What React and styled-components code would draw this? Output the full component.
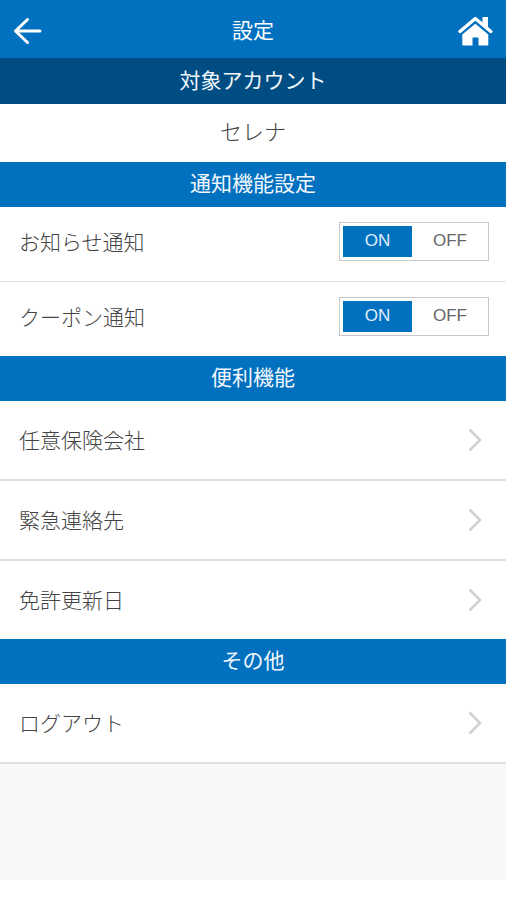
import React, { useState } from "react";
import styled, { createGlobalStyle } from "styled-components";

const GlobalStyle = createGlobalStyle`
  *, *::before, *::after { box-sizing: border-box; }
  body {
    margin: 0;
    background: #fff;
    color: #444;
    font-family: "Noto Sans CJK JP", sans-serif;
    font-size: 21px;
    line-height: 32px;
  }
`;

const Page = styled.div`
  min-height: 100vh;
  display: flex;
  flex-direction: column;
`;

const Header = styled.header`
  display: grid;
  grid-template-columns: 60px 1fr 60px;
  align-items: center;
  height: 58px;
  padding-top: 3px;
  background: #0070bf;
  color: #fff;
`;

const Title = styled.h1`
  margin: 0;
  padding-bottom: 3px;
  font-size: 21px;
  font-weight: 400;
  text-align: center;
`;

const IconButton = styled.button`
  display: flex;
  justify-content: ${(p) => (p.$end ? "flex-end" : "flex-start")};
  padding: 0 12px;
  border: 0;
  background: none;
  color: inherit;
  cursor: pointer;
`;

const SectionTitle = styled.h2`
  margin: 0;
  height: ${(p) => (p.$dark ? 46 : 45)}px;
  padding-top: ${(p) => (p.$dark ? 5 : 4)}px;
  background: ${(p) => (p.$dark ? "#004d84" : "#0070bf")};
  color: #f2f8fd;
  font-size: 21px;
  font-weight: 400;
  text-align: center;
`;

const Account = styled.p`
  margin: 0;
  height: 58px;
  padding-top: 10px;
  background: #fff;
  font-size: 22px;
  font-weight: 300;
  text-align: center;
`;

const List = styled.ul`
  margin: 0;
  padding: 0;
  list-style: none;
  background: #fff;
  font-weight: 300;
`;

const Item = styled.li`
  border-bottom: ${(p) => (p.$last ? 0 : p.$thin ? 1 : 2)}px solid #e0e0e0;
`;

const SettingRow = styled.fieldset`
  display: flex;
  align-items: center;
  justify-content: space-between;
  height: 74px;
  margin: 0;
  padding: 0 17px 6px 19px;
  border: 0;
`;

const Switch = styled.div`
  display: grid;
  grid-template-columns: 69px 76px;
  height: 39px;
  padding: 3px 0 3px 3px;
  border: 1px solid #c8c8c8;
  background: #fff;
`;

const Choice = styled.label`
  display: flex;
  align-items: center;
  justify-content: center;
  color: #666;
  font-family: "Liberation Sans", sans-serif;
  font-size: 17px;
  line-height: 20px;
  cursor: pointer;

  &:has(input:checked) {
    background: #0070bf;
    color: #e0effa;
  }
`;

const Radio = styled.input`
  appearance: none;
  width: 0;
  height: 0;
  margin: 0;
`;

const LinkRow = styled.a`
  display: flex;
  align-items: center;
  justify-content: space-between;
  height: 78px;
  padding: 0 24px 0 19px;
  color: inherit;
  text-decoration: none;
`;

const LinkLabel = styled.span`
  padding-bottom: 3px;
`;

const Rest = styled.div`
  flex: 1;
  background: #f8f8f8;
`;

const Footer = styled.footer`
  height: 20px;
  background: #fff;
`;

function BackIcon() {
  return (
    <svg width="30" height="28" viewBox="0 0 30 28" fill="none" stroke="#fff" strokeWidth="3" strokeLinecap="round" strokeLinejoin="round" aria-hidden="true">
      <path d="M15.5 2.5 3.5 14l12 11.5M3.5 14H28" />
    </svg>
  );
}

function HomeIcon() {
  return (
    <svg width="36" height="30" viewBox="0 0 36 30" aria-hidden="true">
      <path fill="#fff" d="M24.500 1H30v12l-5.500-5z" />
      <path fill="none" stroke="#fff" strokeWidth="3.4" strokeLinecap="round" strokeLinejoin="round" d="M2 15.500 17.300 2.500l15.500 13" />
      <path fill="#fff" d="M17.300 7.800 30.300 18.500v10a1 1 0 0 1-1 1H20.500V21.500H14.500v8H5.300a1 1 0 0 1-1-1V18.500z" />
    </svg>
  );
}

function Chevron() {
  return (
    <svg width="14" height="24" viewBox="0 0 14 24" fill="none" stroke="#d0d0d0" strokeWidth="2.5" aria-hidden="true">
      <path d="M1.500 1.500 12 12 1.500 22.500" />
    </svg>
  );
}

function Setting({ name, label }) {
  const [value, setValue] = useState("ON");
  return (
    <SettingRow aria-label={label}>
      <span>{label}</span>
      <Switch>
        {["ON", "OFF"].map((option) => (
          <Choice key={option}>
            <Radio type="radio" name={name} checked={value === option} onChange={() => setValue(option)} />
            {option}
          </Choice>
        ))}
      </Switch>
    </SettingRow>
  );
}

function LinkItem({ label, last }) {
  return (
    <Item $last={last}>
      <LinkRow href="#">
        <LinkLabel>{label}</LinkLabel>
        <Chevron />
      </LinkRow>
    </Item>
  );
}

export default function App() {
  return (
    <Page>
      <GlobalStyle />
      <Header>
        <IconButton aria-label="戻る"><BackIcon /></IconButton>
        <Title>設定</Title>
        <IconButton $end aria-label="ホーム"><HomeIcon /></IconButton>
      </Header>
      <SectionTitle $dark>対象アカウント</SectionTitle>
      <Account>セレナ</Account>
      <SectionTitle>通知機能設定</SectionTitle>
      <List>
        <Item $thin><Setting name="news" label="お知らせ通知" /></Item>
        <Item $last><Setting name="coupon" label="クーポン通知" /></Item>
      </List>
      <SectionTitle>便利機能</SectionTitle>
      <List>
        <LinkItem label="任意保険会社" />
        <LinkItem label="緊急連絡先" />
        <LinkItem label="免許更新日" last />
      </List>
      <SectionTitle>その他</SectionTitle>
      <List>
        <LinkItem label="ログアウト" />
      </List>
      <Rest />
      <Footer />
    </Page>
  );
}
